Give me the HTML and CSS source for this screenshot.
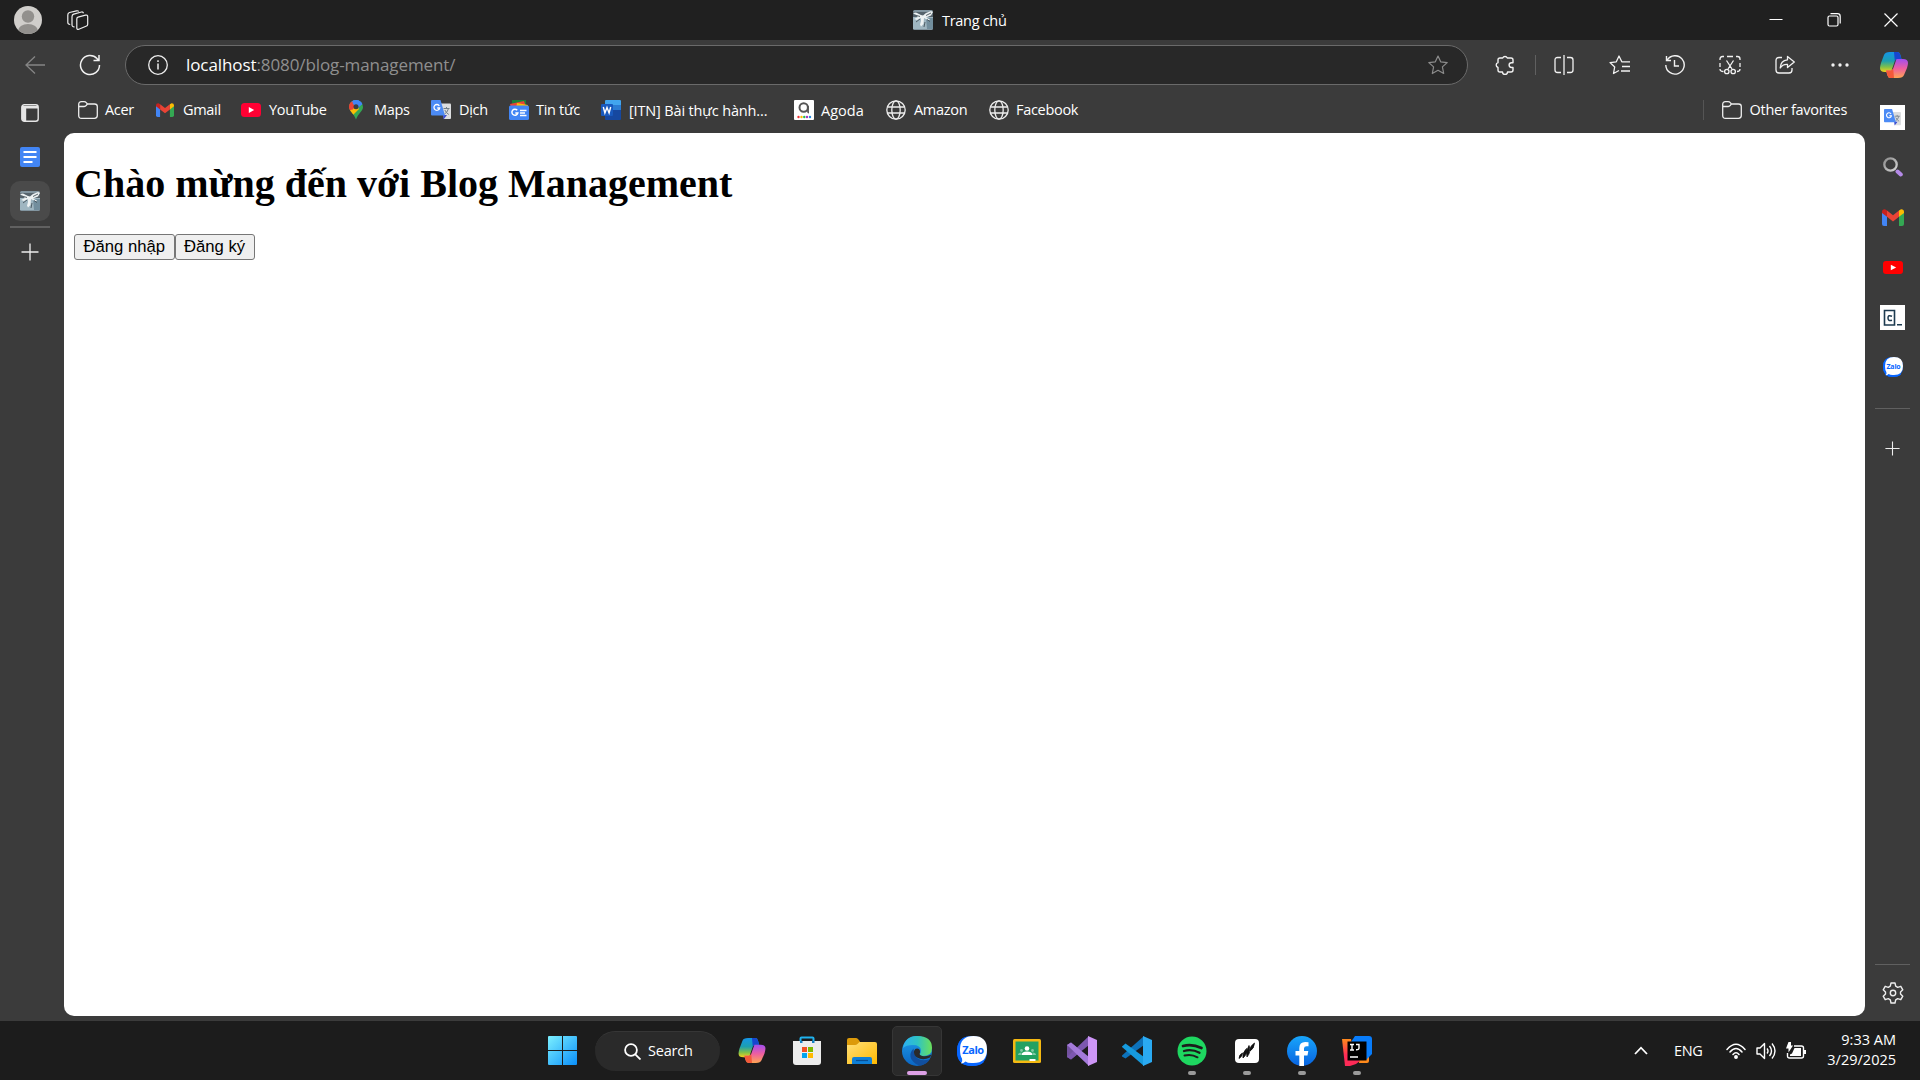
FILE: index.html
```html
<!DOCTYPE html>
<html lang="vi">
<head>
<meta charset="utf-8">
<title>Trang chủ</title>
<link rel="stylesheet" href="styles.css">
</head>
<body>
<svg class="defs" aria-hidden="true">
  <defs>
    <linearGradient id="copA" x1="0" y1="0" x2="0" y2="1"><stop offset="0" stop-color="#1595e8"/><stop offset=".45" stop-color="#1c9fb0"/><stop offset=".75" stop-color="#7fc04a"/><stop offset="1" stop-color="#f5d21c"/></linearGradient>
    <linearGradient id="copB" x1="0" y1="0" x2="0" y2="1"><stop offset="0" stop-color="#a04df0"/><stop offset=".5" stop-color="#ee5fa0"/><stop offset="1" stop-color="#ffa553"/></linearGradient>
    <linearGradient id="win" x1="0" y1="0" x2="1" y2="1"><stop offset="0" stop-color="#7cf0ff"/><stop offset="1" stop-color="#0a8ffa"/></linearGradient>
    <linearGradient id="fold" x1="0" y1="0" x2="1" y2="1"><stop offset="0" stop-color="#ffdf7a"/><stop offset="1" stop-color="#ffb900"/></linearGradient>
    <linearGradient id="edgeA" x1="0" y1="0" x2="1" y2="0"><stop offset="0" stop-color="#2baff0"/><stop offset=".5" stop-color="#2fc3c4"/><stop offset="1" stop-color="#6be05a"/></linearGradient>
    <linearGradient id="edgeB" x1="0" y1="0" x2="0" y2="1"><stop offset="0" stop-color="#1f9de8"/><stop offset="1" stop-color="#0b66c4"/></linearGradient>
    <linearGradient id="fb" x1="0" y1="0" x2="0" y2="1"><stop offset="0" stop-color="#18a5fb"/><stop offset="1" stop-color="#0863e0"/></linearGradient>
    <linearGradient id="ij" x1="0" y1="0" x2="0" y2="1"><stop offset="0" stop-color="#ff8a1c"/><stop offset=".6" stop-color="#fe2b57"/></linearGradient>
    <linearGradient id="lens" x1="0" y1="0" x2="1" y2="1"><stop offset="0" stop-color="#8d8d8d"/><stop offset="1" stop-color="#d5d5d5"/></linearGradient>
  </defs>
  <symbol id="i-copilot" viewBox="0 0 28 26">
    <path d="M10 0h7.500q2 0 2.700 2.500L21.500 7h-4q-2 0-2.700 2L11 20H5Q0 20 0 16q0-1.500 1-5L4 3Q5 0 10 0z" fill="url(#copA)"/>
    <path d="M14 0h3.500q2 0 2.700 2.500L21.500 7h-4q-2 0-2.700 2z" fill="#1746cf"/>
    <path d="M18 26h-7.500q-2.300 0-3-2.500L6 18.500h4.500q2 0 2.700-2L16.500 7H23q5 0 5 4 0 1.500-1 5l-3 7q-1 3-6 3z" fill="url(#copB)"/>
    <path d="M14 26h-3.500q-2.300 0-3-2.500L6 18.500h4.500q2 0 2.700-2z" fill="#f4593a"/>
  </symbol>
  <symbol id="i-gift" viewBox="0 0 20 20">
    <rect width="20" height="20" rx="1.500" fill="#8295a0"/><path d="M0 7h20v12H0z" fill="#9fb6c1"/><path d="M13 8h7v11h-6z" fill="#728e9d"/><path d="M0 2h20v5H0z" fill="#55636c"/>
    <path d="M0 3l3-.5 5 2.500 2 .5L13 3l5-2 2 1-2 3.500-5 2 4 2-1 1-5-2.500-.5 6-2.500 2.500-1-2 1-3.500V8L4 10l-3-1 4-2z" fill="#edf2f3"/><path d="M2 5l5 1.500M13 5.500L18 3M7 9l-4 3M14 9.500l3 2M12 12l-1 5" fill="none" stroke="#46535b" stroke-width=".9"/>
  </symbol>
  <symbol id="i-folder" viewBox="0 0 20 18"><path d="M.7 14.500v-11Q.7.700 3.500.700H6q1.500 0 2.300 1L9.400 3h7.100q2.800 0 2.800 2.500v9q0 2.800-2.800 2.800h-13Q.7 17.300.7 14.500zM.7 5.500h5.500Q7.500 5.500 8.300 4.400L9.400 3" fill="none" stroke="#eee" stroke-width="1.300"/></symbol>
  <symbol id="i-gmail" viewBox="0 0 22 17"><path d="M0 3v12q0 2 2 2h3V6z" fill="#4285f4"/><path d="M22 3v12q0 2-2 2h-3V6z" fill="#34a853"/><path d="M5 1.500l6 4.700 6-4.700v6.300l-6 4.700-6-4.700z" fill="#ea4335"/><path d="M0 3q0-3 3-2.800l2 1.300v6.300L0 4z" fill="#c5221f"/><path d="M22 3q0-3-3-2.800l-2 1.300v6.300L22 4z" fill="#fbbc04"/></symbol>
  <symbol id="i-youtube" viewBox="0 0 20 14"><rect width="20" height="14" rx="3.500" fill="#ff0033"/><path d="M7.800 4v6l5.400-3z" fill="#fff"/></symbol>
  <symbol id="i-globe" viewBox="0 0 20 20"><g fill="none" stroke="#eee" stroke-width="1.300"><circle cx="10" cy="10" r="9.200"/><ellipse cx="10" cy="10" rx="4.200" ry="9.200"/><path d="M1.500 7h17M1.500 13h17"/></g></symbol>
  <symbol id="i-translate" viewBox="0 0 20 20"><path d="M9 3.500h10q1 0 1 1V18q0 1-1 1h-6z" fill="#dcdee0"/><path d="M12 15h4l-3.500 4.500z" fill="#3a4bd0"/><path d="M12.500 8.500h6M15.500 7v1.500M17.500 8.500q-1 4-4 5.500M13.800 10q1.500 3 4 4.500" stroke="#73808a" stroke-width="1" fill="none"/><path d="M1 0h8.500L14 15.500H1q-1 0-1-1V1q0-1 1-1z" fill="#4c8bf5"/><path d="M8.300 5.800A2.900 2.900 0 1 0 8.700 8H6.200" fill="none" stroke="#fff" stroke-width="1.300"/></symbol>
  <symbol id="i-plus" viewBox="0 0 18 18"><path d="M9 .5v17M.5 9h17" stroke="#eee" stroke-width="1.300"/></symbol>
  <symbol id="i-zalo" viewBox="0 0 30 30"><path d="M15 0Q30 0 30 15T15 30 0 15 15 0z" fill="#0866ff"/><path d="M10 .5Q0 3 0 15q0 15 15 15 8 0 12-4L8 8z" fill="#0866ff"/><path d="M16.500 0Q30 0 30 13.500T16.500 27Q11 27.500 8.500 25.500 6.500 27.500 4 27.500 6 25.500 5 22.500 3 19.500 3 13.500 3 0 16.500 0z" fill="#fff"/></symbol>
</svg>

<header class="titlebar">
  <div class="title-left">
    <svg width="28" height="28" viewBox="0 0 28 28"><clipPath id="av"><circle cx="14" cy="14" r="14"/></clipPath><g clip-path="url(#av)"><path fill="#d0cecb" d="M0 0h28v28H0z"/><circle cx="14" cy="10.500" r="6.200" fill="#92908d"/><ellipse cx="14" cy="25" rx="10" ry="7" fill="#92908d"/></g></svg>
    <svg width="22" height="20" viewBox="0 0 22 20" fill="none" stroke="#eee" stroke-width="1.200"><path d="M11 7.200l7.500-2q2.200-.5 2.200 1.500v7.500q0 1.500-1.700 2.100l-7.200 2.900q-2 .7-2-1.300V9q0-1.500 1.200-1.800z"/><path d="M7.500 16.800q-2.500.2-2.500-2V6.700q0-2 1.700-2.500l7.800-2.200q1.500-.3 2 1.200"/><path d="M3.200 14.500Q.8 14.300.8 12.500V5q0-2 1.700-2.500L9.500.8q1.700-.3 2.200.7"/></svg>
  </div>
  <div class="title-tab"><svg width="20" height="20"><use href="#i-gift"/></svg><span>Trang chủ</span></div>
  <div class="window-buttons">
    <svg width="14" height="14" viewBox="0 0 14 14"><path d="M.5 6.500h13" stroke="#fff" stroke-width="1"/></svg>
    <svg width="14" height="14" viewBox="0 0 14 14" fill="none" stroke="#fff" stroke-width="1.200"><rect x="1" y="3" width="10" height="10" rx="1.500"/><path d="M3.500.700h7q2.700 0 2.700 2.700v7"/></svg>
    <svg width="14" height="14" viewBox="0 0 14 14"><path d="M.5.500l13 13M13.500.500l-13 13" stroke="#fff" stroke-width="1.200"/></svg>
  </div>
</header>

<nav class="toolbar">
  <svg width="20" height="18" viewBox="0 0 20 18" fill="none" stroke="#858585" stroke-width="1.300"><path d="M20 9H1M10 .5L1 9l9 8.500"/></svg>
  <svg width="22" height="22" viewBox="0 0 22 22" fill="none" stroke="#f2f2f2" stroke-width="1.500"><path d="M20.500 11A9.500 9.500 0 1 1 18 4.600L20 6.500M20 1v5.500h-5.500"/></svg>
  <div class="address">
    <svg width="20" height="20" viewBox="0 0 20 20"><circle cx="10" cy="10" r="9.300" fill="none" stroke="#eee" stroke-width="1.300"/><path d="M10 8.500v6M10 5.200v1.700" stroke="#eee" stroke-width="1.500"/></svg>
    <span class="url"><b>localhost</b>:8080/blog-management/</span>
    <svg class="star" width="20" height="20" viewBox="0 0 20 20"><path d="M10 1l2.700 5.800 6.500.8-4.800 4.300 1.300 6.600L10 15.300l-5.700 3.200 1.300-6.600L.8 7.600l6.500-.8z" fill="none" stroke="#8c8c8c" stroke-width="1.200" stroke-linejoin="round"/></svg>
  </div>
  <svg class="puzzle" width="20" height="20" viewBox="0 0 20 20"><path d="M5 3h2.700a2.500 2.500 0 0 1 4.600 0H16q2 0 2 2v2.700h-1.500a2.400 2.400 0 0 0 0 4.800H18V15q0 2-2 2h-3.500a2.500 2.500 0 0 1-5 0H5q-2 0-2-2v-2.500a2.500 2.500 0 0 1 0-4.800V5q0-2 2-2z" fill="none" stroke="#f2f2f2" stroke-width="1.400" stroke-linejoin="round"/></svg>
  <i class="tool-divider"></i>
  <svg width="20" height="20" viewBox="0 0 20 20" fill="none" stroke="#f2f2f2" stroke-width="1.300"><path d="M7 2.500H3.500Q1 2.500 1 5v10q0 2.500 2.500 2.500H7M13 2.500h3.500Q19 2.500 19 5v10q0 2.500-2.500 2.500H13M10 0v20"/></svg>
  <svg width="22" height="20" viewBox="0 0 22 20" fill="none" stroke="#f2f2f2" stroke-width="1.300" stroke-linejoin="round"><path d="M10 15.500l-5.500 3 1.200-6.600L1 7.600l6.300-.8L10 1l2.800 5.800H21M13 11.500h8M12 16h9"/></svg>
  <svg width="20" height="20" viewBox="0 0 20 20" fill="none" stroke="#f2f2f2" stroke-width="1.400"><path d="M1.500 1v4.500H6M2.200 5A9.200 9.200 0 1 1 .8 10M9.500 5v6H14"/></svg>
  <svg width="22" height="20" viewBox="0 0 22 20" fill="none" stroke="#f2f2f2" stroke-width="1.300"><path d="M1 5V4q0-2.500 2.500-2.500H5M8 1.500h6M17 1.500h1.500Q21 1.500 21 4v1M1 8v4M21 8v4M1 14q0 2.500 3.500 2.500M21 14q0 2.500-3 2.500M7.500 5.500L13 14M14.500 5.500L9 14"/><circle cx="7.800" cy="16.500" r="2.200"/><circle cx="14.200" cy="16.500" r="2.200"/></svg>
  <svg width="20" height="20" viewBox="0 0 20 20" fill="none" stroke="#f2f2f2" stroke-width="1.300" stroke-linejoin="round"><path d="M7 2.500H4Q1 2.500 1 5.500V15q0 3 3 3h10q3 0 3-3v-2M12.500 1.500L19.300 7l-6.800 5.500V9.300Q7.500 9 5.200 13 5.500 5.500 12.500 4.800z"/></svg>
  <svg width="18" height="4" viewBox="0 0 18 4" fill="#f2f2f2"><circle cx="2" cy="2" r="1.700"/><circle cx="9" cy="2" r="1.700"/><circle cx="16" cy="2" r="1.700"/></svg>
  <svg width="28" height="26"><use href="#i-copilot"/></svg>
</nav>

<main class="browser">
  <aside class="tabs">
    <svg width="18" height="18" viewBox="0 0 18 18"><rect x=".8" y=".8" width="16.400" height="16.400" rx="2.500" fill="none" stroke="#e6e6e6" stroke-width="1.400"/><path d="M1 2h16v2.500H5.200V17H2.500Q1 17 1 15z" fill="#e6e6e6"/></svg>
    <svg width="20" height="20" viewBox="0 0 20 20"><rect width="20" height="20" rx="2" fill="#4285f4"/><path d="M3.500 5h13M3.500 10h13M3.500 15h9" stroke="#fff" stroke-width="2"/></svg>
    <div class="tab-active"><svg width="20" height="20"><use href="#i-gift"/></svg></div>
    <i></i>
    <svg class="new-tab" width="18" height="18"><use href="#i-plus"/></svg>
  </aside>
  <div class="favorites">
    <div class="fav f-acer"><svg width="20" height="18"><use href="#i-folder"/></svg><span>Acer</span></div>
    <div class="fav f-gmail"><svg width="18" height="14"><use href="#i-gmail"/></svg><span>Gmail</span></div>
    <div class="fav f-youtube"><svg width="20" height="14"><use href="#i-youtube"/></svg><span>YouTube</span></div>
    <div class="fav f-maps"><svg width="14" height="20" viewBox="0 0 14 20"><clipPath id="pin"><path d="M7 0a7 7 0 0 1 7 7c0 4-4.500 6-7 12.500C4.500 13 0 11 0 7a7 7 0 0 1 7-7z"/></clipPath><g clip-path="url(#pin)"><path d="M0 0h14v20H0z" fill="#34a853"/><path d="M0 0h14v4L7 8z" fill="#4285f4"/><path d="M0 0l7 7-7 5z" fill="#ea4335"/><path d="M0 12l7-8 3 5-7 7z" fill="#fbbc04"/><path d="M0 2l5-1 4 3-6 6-3-2z" fill="#ea4335"/><path d="M3 0h11v3L9 8 4 4z" fill="#4285f4"/></g><circle cx="7" cy="6.800" r="2.500" fill="#393d42"/></svg><span>Maps</span></div>
    <div class="fav f-translate"><svg width="20" height="20"><use href="#i-translate"/></svg><span>Dịch</span></div>
    <div class="fav f-news"><svg width="20" height="20" viewBox="0 0 20 20"><path d="M3 0h14v8H3z" fill="#188038"/><path d="M1 4l14-3 2 6H2z" fill="#ea4335"/><path d="M8 3l11 2-1 4H7z" fill="#fbbc04"/><rect y="5.500" width="20" height="14.500" rx="1.500" fill="#4285f4"/><path d="M8.200 10.300A3 3 0 1 0 8.800 13H6.300M11 10.500h6.500M11 13h5M11 15.500h6.500" fill="none" stroke="#fff" stroke-width="1.500"/></svg><span>Tin tức</span></div>
    <div class="fav f-word"><svg width="20" height="20" viewBox="0 0 20 20"><path d="M5 0h14q1 0 1 1v4H4V1q0-1 1-1z" fill="#41a5ee"/><path d="M4 5h16v5H4z" fill="#2b7cd3"/><path d="M4 10h16v9q0 1-1 1H5q-1 0-1-1z" fill="#1648a0"/><rect y="4" width="12" height="12" rx="1" fill="#1859bd"/><path d="M2.300 7l1.600 6L6 7.500 8.100 13l1.600-6" fill="none" stroke="#fff" stroke-width="1.400"/></svg><span>[ITN] Bài thực hành...</span></div>
    <div class="fav f-agoda"><svg width="20" height="20" viewBox="0 0 20 20"><rect width="20" height="20" rx="1" fill="#fff"/><circle cx="9.700" cy="7.500" r="4.200" fill="none" stroke="#555" stroke-width="2"/><path d="M14 6v5.500q0 1 1 1" stroke="#555" stroke-width="1.800" fill="none"/><g><circle cx="4.500" cy="17" r="1.200" fill="#e33"/><circle cx="7.500" cy="17" r="1.200" fill="#fb0"/><circle cx="10.300" cy="17" r="1.200" fill="#2b5"/><circle cx="13" cy="17" r="1.200" fill="#a3b"/><circle cx="16" cy="17" r="1.200" fill="#28d"/></g></svg><span>Agoda</span></div>
    <div class="fav f-amazon"><svg width="20" height="20"><use href="#i-globe"/></svg><span>Amazon</span></div>
    <div class="fav f-facebook"><svg width="20" height="20"><use href="#i-globe"/></svg><span>Facebook</span></div>
    <div class="fav f-other"><svg width="20" height="18"><use href="#i-folder"/></svg><span>Other favorites</span></div>
  </div>
  <section class="page">
    <h1>Chào mừng đến với Blog Management</h1>
    <div class="actions"><button>Đăng nhập</button><button>Đăng ký</button></div>
  </section>
  <aside class="sidebar">
    <div class="tile"><svg width="17" height="17"><use href="#i-translate"/></svg></div>
    <svg class="s-search" width="20" height="20" viewBox="0 0 20 20"><circle cx="7.500" cy="7.500" r="6.200" fill="none" stroke="url(#lens)" stroke-width="2.300"/><path d="M14.500 14.500l3.300 3" stroke="#b58ae8" stroke-width="4" stroke-linecap="round"/></svg>
    <svg width="22" height="17"><use href="#i-gmail"/></svg>
    <svg class="s-youtube" width="20" height="13" viewBox="0 0 20 13"><rect width="20" height="13" rx="3" fill="#f00"/><path d="M7.800 3.700v5.600l5.400-2.800z" fill="#fff"/></svg>
    <div class="tile"><svg width="20" height="18" viewBox="0 0 20 18" fill="none" stroke="#1d3b50"><path d="M1.500 1.500h10v14.500h-10z" stroke-width="1.600"/><path d="M9 7.200Q5 5.500 5 9t4 2.300M14 15.800h5" stroke-width="1.500"/></svg></div>
    <div class="zalo zalo-small"><svg width="20" height="20"><use href="#i-zalo"/></svg><span>Zalo</span></div>
    <i></i>
    <svg class="s-plus" width="15" height="15"><use href="#i-plus"/></svg>
    <div class="side-foot"><i></i><svg width="22" height="22" viewBox="0 0 22 22" fill="none" stroke="#eee" stroke-width="1.400" stroke-linejoin="round"><path d="M9 1h4l.7 3.100 2 1.200 3.100-1 2 3.500L18.500 10v2l2.300 2.200-2 3.500-3.100-1-2 1.200L13 21H9l-.7-3.100-2-1.200-3.100 1-2-3.500L3.500 12v-2L1.200 7.800l2-3.500 3.100 1 2-1.200z"/><circle cx="11" cy="11" r="2.700"/></svg></div>
  </aside>
</main>

<footer class="taskbar">
  <div class="apps">
    <div class="app app-start"><svg width="29" height="29" viewBox="0 0 29 29" fill="url(#win)"><path d="M1 0h13v14H0V1q0-1 1-1zM15 0h13q1 0 1 1v13H15zM0 15h14v14H1q-1 0-1-1zM15 15h14v13q0 1-1 1H15z"/></svg></div>
    <div class="search"><svg width="17" height="17" viewBox="0 0 17 17" fill="none" stroke="#fff" stroke-width="1.800"><circle cx="7" cy="7" r="5.900"/><path d="M11.300 11.300l5.200 5.200"/></svg><span>Search</span></div>
    <div class="app"><svg width="28" height="25"><use href="#i-copilot"/></svg></div>
    <div class="app"><svg width="30" height="30" viewBox="0 0 30 30"><path d="M8.500 7V2.500Q8.500 1.500 9.500 1.500h11q1 0 1 1V7" fill="none" stroke="#1fb2ee" stroke-width="2"/><path d="M1 5h28v21q0 3-3 3H4q-3 0-3-3z" fill="#ececec"/><path d="M8 5h2.500v2H8zM20 5h2.500v2H20z" fill="#1681c4"/><path d="M10 11h5v5h-5z" fill="#f25022"/><path d="M16 11h5v5h-5z" fill="#7fba00"/><path d="M10 17h5v5h-5z" fill="#00a4ef"/><path d="M16 17h5v5h-5z" fill="#ffb900"/></svg></div>
    <div class="app"><svg width="30" height="28" viewBox="0 0 30 28"><path d="M0 3q0-2 2-2h7q1 0 2 1l2 2.500V10H0z" fill="#dc9a0a"/><path d="M0 8h8q1.500 0 2.500-1l2-2H28q2 0 2 2v20H0z" fill="url(#fold)"/><path d="M5 27v-5q0-2 2-2h16q2 0 2 2v5z" fill="#0f7fd6"/><path d="M9 23.500h12" stroke="#084e94" stroke-width="1.200"/></svg></div>
    <div class="app app-current"><svg width="30" height="30" viewBox="0 0 30 30"><circle cx="15" cy="15" r="15" fill="url(#edgeB)"/><path d="M1 12Q3 0 15 0q15 0 15 12 0 8-9 8-3.500 0-3.500-2 1.500-1 1.500-3.500Q18.500 9 11 9 4 9 1 12z" fill="url(#edgeA)"/><path d="M11.500 12.500q-5 5-2 11 4 6 10 6 6-2 8.500-6.500-8 3-13-1-3-3-3.500-9.500z" fill="#114f9f"/><path d="M12 15q-.5 4 3 6.500 6 3.500 13 0l1.500-3q-5 2.500-9 1.500-4-1-2.500-3.500.5-2-1-3.500-3.500-1.500-5 2z" fill="#2a2a2a"/></svg><b></b></div>
    <div class="app"><div class="zalo"><svg width="30" height="30"><use href="#i-zalo"/></svg><span>Zalo</span></div></div>
    <div class="app"><svg width="28" height="24" viewBox="0 0 28 24"><rect width="28" height="24" rx="1.500" fill="#f5b912"/><path d="M2.500 2.500h23v19h-23z" fill="#22a162"/><circle cx="14" cy="9.500" r="2.300" fill="#fff"/><path d="M8.500 16q0-3.500 5.500-3.500t5.500 3.500z" fill="#fff"/><g fill="#7fcaa4"><circle cx="8.500" cy="11.500" r="1.400"/><circle cx="19.500" cy="11.500" r="1.400"/><path d="M5 16q0-2.500 3.500-2.500V16zM23 16q0-2.500-3.500-2.500V16z"/></g><path d="M16.500 20h6v2h-6z" fill="#fff"/></svg></div>
    <div class="app"><svg width="30" height="30" viewBox="0 0 30 30"><path d="M0 9l4-2.500L14 15 4 23.500 0 21z" fill="#73529f"/><path d="M0 21L22 0v9L4 23.500z" fill="#7d57b0"/><path d="M4 6.500L22 21v9L0 9z" fill="#a47ad9"/><path d="M21 0l9 4v22l-9 4z" fill="#cd95f6"/></svg></div>
    <div class="app"><svg width="30" height="30" viewBox="0 0 30 30"><path d="M0 19.500L22 0v9L3.500 22.500 0 20.500z" fill="#0d72ba"/><path d="M0 10.500l3.500-3L22 21v9L0 11z" fill="#169add"/><path d="M21 0l9 4v22l-9 4z" fill="#2aaaf2"/></svg></div>
    <div class="app run"><svg width="30" height="30" viewBox="0 0 30 30"><circle cx="15" cy="15" r="14.500" fill="#1ed760"/><g fill="none" stroke="#1c1c1c" stroke-linecap="round"><path d="M6 10q9-2.500 18.500 2" stroke-width="2.700"/><path d="M7 15q8-2.300 15.500 1.800" stroke-width="2.300"/><path d="M7.500 19.500q7-1.800 13 1.800" stroke-width="2"/></g></svg><b></b></div>
    <div class="app run"><svg width="24" height="24" viewBox="0 0 24 24"><rect width="24" height="24" rx="4" fill="#fff"/><path d="M4 19.500q0-4 3.500-5.500 0 3.500-3.500 5.500zM8 19q-1-5 3.500-9.500 1.500 5-3.500 9.500zM12 18q-1.500-6 2-11.500 2.500 6-2 11.500zM15 12q-.5-5 4.500-8-.5 6-4.500 8z" fill="#111" stroke="#111" stroke-width=".8"/></svg><b></b></div>
    <div class="app run"><svg width="30" height="30" viewBox="0 0 30 30"><circle cx="15" cy="15" r="15" fill="url(#fb)"/><path d="M12.300 30V19.500H8.500V15h3.800v-3q0-6 6-6 1.800 0 3.200.3v4h-2q-2.500 0-2.500 2.200V15h4.300l-.8 4.500H17V30z" fill="#fff"/></svg><b></b></div>
    <div class="app run"><svg width="30" height="30" viewBox="0 0 30 30"><path d="M0 3h9l5 24-11 3z" fill="url(#ij)"/><path d="M3 30l1-8h18l-8 6-6 2z" fill="#fe2b57"/><path d="M18 20h9v5q0 2-2 2h-8z" fill="#ff8a1c"/><path d="M9 6l4-6h14q3 0 3 3v15l-6 6z" fill="#087cfa"/><path d="M5.500 5.500h19v19h-19z"/><path d="M8 8.500h4M10 8.500v5.500M8 14h4M14 8.500h3V12q0 2-3 1.800M8 21h8" stroke="#fff" stroke-width="1.400" fill="none"/></svg><b></b></div>
  </div>
  <div class="tray">
    <svg class="chev" width="14" height="9" viewBox="0 0 14 9"><path d="M1 8l6-6.300L13 8" fill="none" stroke="#fff" stroke-width="1.800"/></svg>
    <span class="lang">ENG</span>
    <svg width="20" height="16" viewBox="0 0 20 16" fill="none" stroke="#fff" stroke-width="1.500" stroke-linecap="round"><path d="M1 6.500q9-10.500 18 0M4 9q6-7 12 0M7 11.500q3-3.500 6 0"/><circle cx="10" cy="14" r="1.200" fill="#fff"/></svg>
    <svg width="20" height="18" viewBox="0 0 20 18" fill="none" stroke="#fff" stroke-width="1.400" stroke-linejoin="round"><path d="M1 6h3l4.500-4.500v15L4 12H1zM11 6.500q2 2.500 0 5M13.500 4q4 5 0 10M16 1.500q6 7.500 0 15"/></svg>
    <svg width="20" height="18" viewBox="0 0 20 18"><path d="M8 4h7.500q2 0 2 2v8q0 2-2 2h-12q-2 0-2-2v-3" fill="none" stroke="#fff" stroke-width="1.400"/><path d="M8.500 6H15v8H4v-1.500l2-1z" fill="#fff"/><path d="M18 8h2v4h-2zM2.500 0H5v3.500h2l-4.500 7V6.500H0z" fill="#fff"/></svg>
    <div class="clock"><span>9:33 AM</span><span>3/29/2025</span></div>
  </div>
</footer>
</body>
</html>
```

FILE: styles.css
```css
* { box-sizing: border-box; }
html, body { margin: 0; height: 100%; }
body {
  display: grid;
  grid-template-rows: 40px 51px 1fr 59px;
  width: 1920px;
  height: 1080px;
  overflow: hidden;
  background: #3b3b3b;
  color: #fff;
  font: 14.5px/20px "Open Sans", "Noto Sans", sans-serif;
  letter-spacing: -0.3px;
  white-space: nowrap;
}
svg { display: block; flex: none; }
i { display: block; }
.defs { position: absolute; width: 0; height: 0; }

/* Zalo badge: bubble with the name over it */
.zalo { display: grid; place-items: center; color: #0866ff; font: bold 11px/14px "Open Sans", sans-serif; letter-spacing: -0.4px; }
.zalo > * { grid-area: 1 / 1; }
.zalo span { padding: 0 0 2px 3px; }
.zalo-small { font-size: 7px; line-height: 10px; letter-spacing: -0.2px; }
.zalo-small span { padding: 0 0 1px 2px; }

/* Title bar */
.titlebar { display: grid; grid-template-columns: 913px 1fr auto; align-items: center; background: #202020; }
.title-left { display: flex; align-items: center; gap: 25px; padding-left: 14px; }
.title-tab { display: flex; align-items: center; gap: 9px; }
.title-tab span { padding-top: 1px; }
.window-buttons { display: flex; gap: 43.5px; padding-right: 22px; }

/* Toolbar */
.toolbar {
  display: grid;
  grid-template-columns: 70px 40px 1358px 66px 2px 56px 56px 54px 55px 55px 55px 53px;
  align-items: center;
  justify-items: center;
  height: 50px;
}
.address {
  display: flex;
  align-items: center;
  width: 1343px;
  height: 40px;
  margin-left: 15px;
  padding: 0 19px 0 22px;
  border: 1px solid #6a6a6a;
  border-radius: 20px;
  background: #282828;
}
.url { margin-left: 9px; padding-left: 9px; color: #8f8f8f; font-size: 17px; letter-spacing: -0.09px; }
.url b { color: #fff; font-weight: 400; }
.star { margin-left: auto; }
.puzzle { margin-left: 7px; }
.tool-divider { width: 1px; height: 20px; background: #606060; }

/* Browser body */
.browser {
  display: grid;
  grid-template: 42px 1fr / 64px 1fr 54px;
  grid-template-areas: "tabs favorites sidebar" "tabs page sidebar";
  min-height: 0;
}
.tabs { grid-area: tabs; display: flex; flex-direction: column; align-items: center; width: 60px; padding-top: 13px; }
.tabs > svg:nth-child(2) { margin: 25px 0 14px; }
.tab-active { display: grid; place-items: center; width: 40px; height: 40px; border-radius: 10px; background: #4a4a4a; }
.tabs > i { width: 40px; height: 2px; margin: 5px 0 15px; background: #606060; }
.new-tab { margin-right: 1px; }

.favorites { grid-area: favorites; display: flex; align-items: center; height: 38px; padding-left: 14px; }
.fav { display: flex; align-items: center; gap: 7px; }
.f-acer { width: 78px; }
.f-gmail { width: 85px; gap: 9px; }
.f-youtube { width: 108px; gap: 8px; }
.f-maps { width: 82px; gap: 11px; }
.f-translate { width: 78px; gap: 8px; }
.f-news { width: 92px; gap: 7px; }
.f-word { width: 193px; gap: 8px; letter-spacing: -0.15px; }
.f-agoda { width: 92px; letter-spacing: 0; }
.f-word span, .f-agoda span { padding-top: 1px; }
.f-amazon { width: 103px; gap: 8px; }
.f-other { margin-left: auto; margin-right: 19px; padding-left: 18px; gap: 8px; border-left: 1px solid #555; }

.page {
  grid-area: page;
  margin: 0 1px 5px 0;
  padding: 0 10px;
  border-radius: 10px;
  background: #fff;
  color: #000;
  letter-spacing: 0;
}
.page h1 { margin: 26.8px 0; font: bold 40px "Liberation Serif", serif; }
.actions { display: flex; }
.actions button {
  height: 26px;
  padding: 1px 8.5px;
  border: 1px solid #767676;
  border-radius: 3px;
  background: #efefef;
  color: #000;
  font: 16.67px "Liberation Sans", sans-serif;
}

.sidebar { grid-area: sidebar; display: flex; flex-direction: column; align-items: center; padding: 14px 1px 0 0; }
.tile { display: grid; place-items: center; width: 25px; height: 25px; background: #fff; }
.s-search { margin: 27px 0 32px; }
.s-youtube { margin: 35px 0 31px; }
.zalo-small { margin: 27px 0 31px; }
.sidebar i { width: 35px; height: 1px; background: #606060; }
.s-plus { margin-top: 32px; }
.side-foot { display: flex; flex-direction: column; align-items: center; gap: 17px; margin-top: auto; padding-bottom: 17px; }

/* Taskbar */
.taskbar { display: flex; align-items: center; background: #1c1c1c; }
.apps { display: flex; align-items: center; padding-left: 534px; }
.app { position: relative; display: grid; place-items: center; width: 55px; height: 50px; }
.app-start { padding-left: 2px; }
.app-current { width: 50px; margin: 0 2.5px; border: 1px solid #363636; border-radius: 5px; background: #2a2a2a; }
.app b { position: absolute; bottom: 1px; left: 50%; width: 8px; height: 4px; border-radius: 2px; background: #9a9a9a; transform: translateX(-50%); }
.app-current b { bottom: 0; width: 20px; background: #dda0e6; }
.search {
  display: flex;
  align-items: center;
  gap: 7px;
  width: 125px;
  height: 40px;
  margin: 0 4px 0 6px;
  padding-left: 29px;
  border-radius: 20px;
  border-top: 1px solid #363636;
  background: #2a2a2a;
  letter-spacing: -0.2px;
}
.tray { display: flex; align-items: center; margin-left: auto; padding-right: 24px; gap: 10px; }
.lang { width: 30px; margin: 0 12px 0 16px; }
.clock { display: flex; flex-direction: column; width: 80px; margin-top: -2px; text-align: right; letter-spacing: 0; }
```
